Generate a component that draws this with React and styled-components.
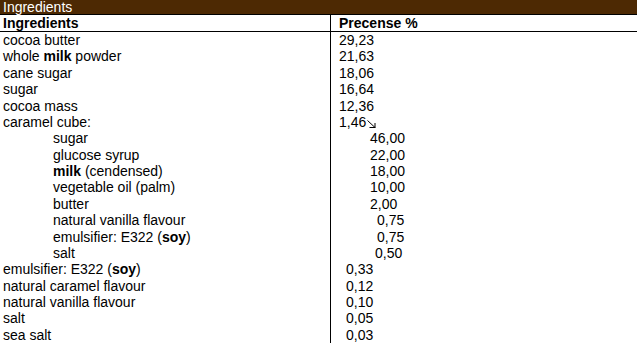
import React from "react";
import styled, { createGlobalStyle } from "styled-components";

const GlobalStyle = createGlobalStyle`
  html, body {
    margin: 0;
    padding: 0;
    background: #fff;
  }
  body {
    font-family: "Liberation Sans", Arial, sans-serif;
    font-size: 14px;
    color: #000;
  }
`;

const Sheet = styled.div`
  width: 637px;
  height: 345px;
  overflow: hidden;
`;

const TitleBar = styled.div`
  height: 14px;
  line-height: 14px;
  background: #4d2903;
  color: #fff;
  padding-left: 3px;
  border-bottom: 1px solid #000;
`;

const Row = styled.div`
  display: grid;
  grid-template-columns: 330px 1fr;
  height: ${({ $head }) => ($head ? "16px" : "16.39px")};
  line-height: ${({ $head }) => ($head ? "16px" : "16.2px")};
  border-bottom: ${({ $head }) => ($head ? "1px solid #000" : "none")};
  font-weight: ${({ $head }) => ($head ? 700 : 400)};
  white-space: nowrap;
`;

const Name = styled.div`
  padding-left: ${({ $sub }) => ($sub ? "53px" : "3px")};
`;

const Value = styled.div`
  border-left: 1px solid #000;
  padding-left: ${({ $pad }) => $pad}px;
  display: flex;
  align-items: center;
`;

const Arrow = styled.svg`
  width: 9px;
  height: 8px;
  margin-left: 1px;
  margin-top: 3px;
`;

const rows = [
  { name: "cocoa butter", value: "29,23" },
  { name: <>whole <b>milk</b> powder</>, value: "21,63" },
  { name: "cane sugar", value: "18,06" },
  { name: "sugar", value: "16,64" },
  { name: "cocoa mass", value: "12,36" },
  { name: "caramel cube:", value: "1,46", arrow: true },
  { name: "sugar", value: "46,00", sub: true, pad: 39 },
  { name: "glucose syrup", value: "22,00", sub: true, pad: 39 },
  { name: <><b>milk</b> (cendensed)</>, value: "18,00", sub: true, pad: 39 },
  { name: "vegetable oil (palm)", value: "10,00", sub: true, pad: 39 },
  { name: "butter", value: "2,00", sub: true, pad: 39 },
  { name: "natural vanilla flavour", value: "0,75", sub: true, pad: 46 },
  { name: <>emulsifier: E322 (<b>soy</b>)</>, value: "0,75", sub: true, pad: 46 },
  { name: "salt", value: "0,50", sub: true, pad: 44 },
  { name: <>emulsifier: E322 (<b>soy</b>)</>, value: "0,33", pad: 15 },
  { name: "natural caramel flavour", value: "0,12", pad: 15 },
  { name: "natural vanilla flavour", value: "0,10", pad: 15 },
  { name: "salt", value: "0,05", pad: 15 },
  { name: "sea salt", value: "0,03", pad: 15 },
];

export default function App() {
  return (
    <Sheet>
      <GlobalStyle />
      <TitleBar>Ingredients</TitleBar>
      <Row $head>
        <Name>Ingredients</Name>
        <Value $pad={8}>Precense %</Value>
      </Row>
      {rows.map((r, i) => (
        <Row key={i}>
          <Name $sub={r.sub}>{r.name}</Name>
          <Value $pad={r.pad || 8}>
            {r.value}
            {r.arrow && (
              <Arrow viewBox="0 0 9 8">
                <path d="M0.5 0.5 L8 7.5 M2.5 7.5 H8.5 M8 7.5 V3" stroke="#000" strokeWidth="1" fill="none" />
              </Arrow>
            )}
          </Value>
        </Row>
      ))}
    </Sheet>
  );
}
